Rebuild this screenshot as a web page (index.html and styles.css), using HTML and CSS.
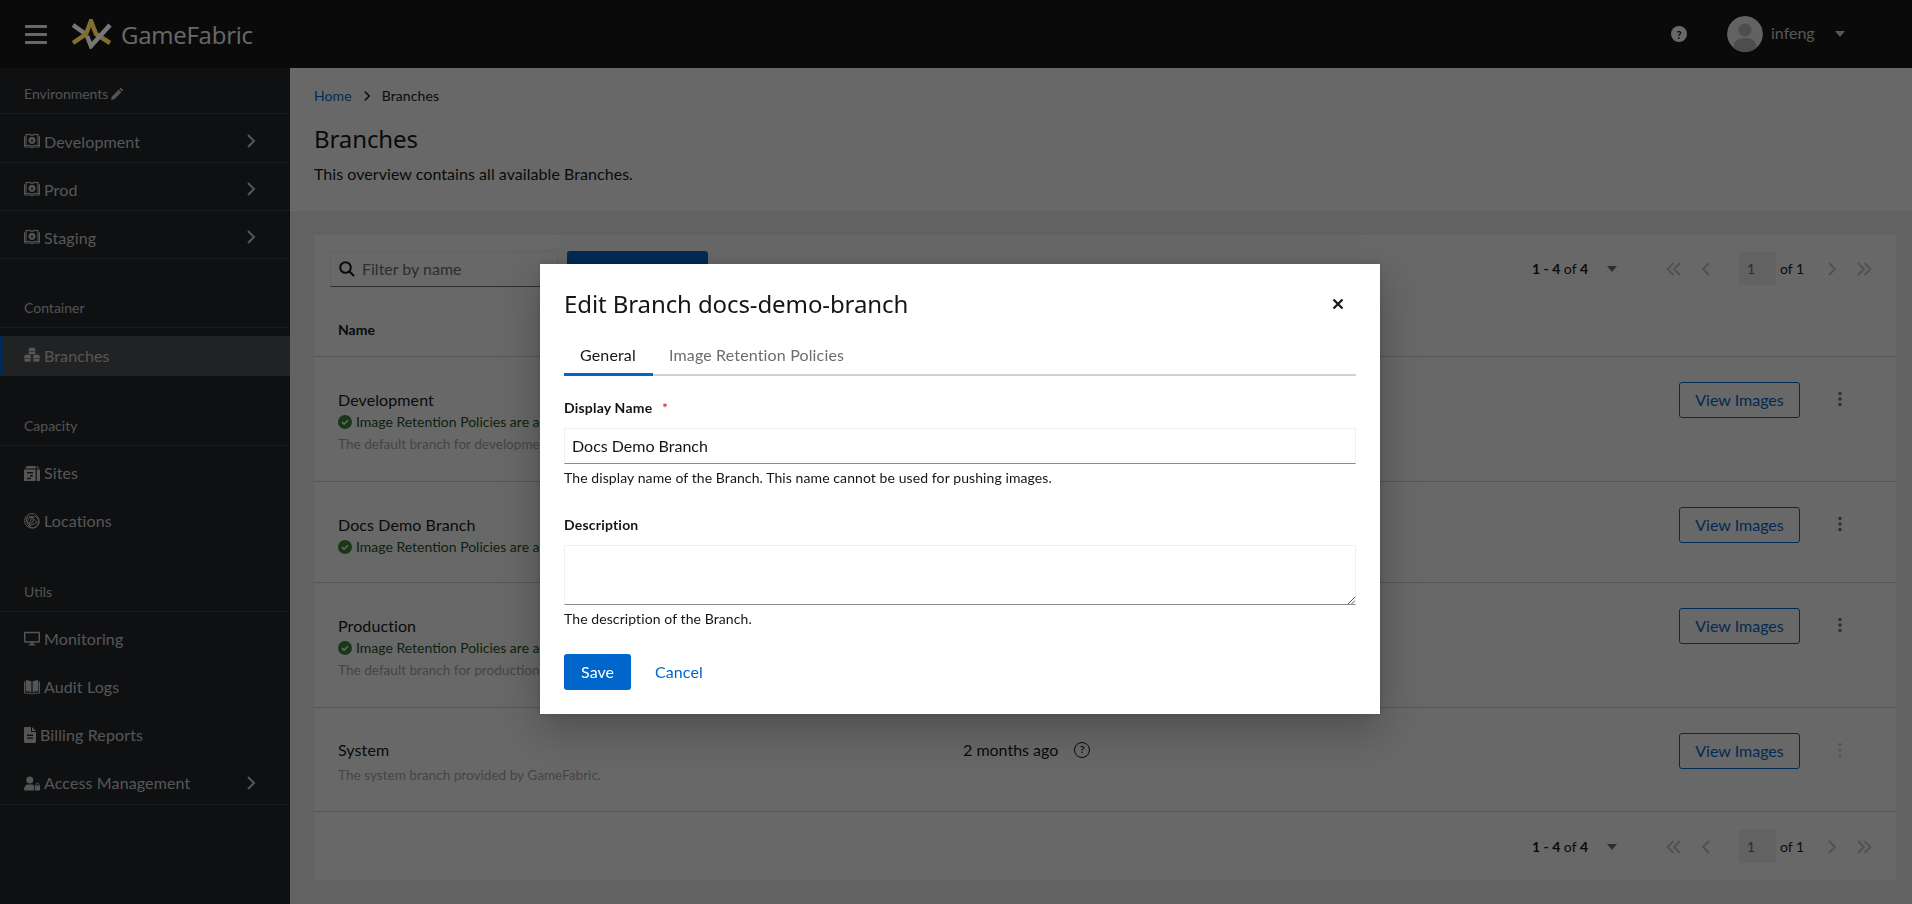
FILE: index.html
```html
<!DOCTYPE html>
<html lang="en">
<head>
<meta charset="utf-8">
<title>Branches - GameFabric</title>
<link rel="stylesheet" href="styles.css">
</head>
<body>
<svg class="defs" width="0" height="0" aria-hidden="true">
  <symbol id="i-bookcog" viewBox="0 0 16 16">
    <path d="M.5 3.200V14H6.500L8 15 9.500 14H15.500V3.200" fill="none" stroke="currentColor" stroke-width="1"/>
    <path d="M2 1.500C4 1.200 6.600 1.500 8 2.400 9.400 1.500 12 1.200 14 1.500V12.500H9.500L8 13.200 6.500 12.500H2Z" fill="none" stroke="currentColor" stroke-width="1.200"/>
    <circle cx="8" cy="7.400" r="2.400" fill="none" stroke="currentColor" stroke-width="1.800"/>
    <path d="M8 3.800V11M4.400 7.400H11.600M5.500 4.900 10.500 9.900M10.500 4.900 5.500 9.900" stroke="currentColor" stroke-width="1"/>
    <circle cx="8" cy="7.400" r="1" fill="#212427"/>
  </symbol>
  <symbol id="i-cubes" viewBox="0 0 16 16">
    <g fill="currentColor">
      <ellipse cx="8" cy="2.200" rx="3.400" ry="1.600"/><rect x="4.600" y="3" width="6.800" height="1.100"/><rect x="4.600" y="4.600" width="6.800" height="1.100"/><ellipse cx="8" cy="6.200" rx="3.400" ry="1.100"/>
      <ellipse cx="3.600" cy="9.200" rx="3.400" ry="1.600"/><rect x=".2" y="10" width="6.800" height="1.100"/><rect x=".2" y="11.600" width="6.800" height="1.100"/><ellipse cx="3.600" cy="13.400" rx="3.400" ry="1.300"/>
      <ellipse cx="12.400" cy="9.200" rx="3.400" ry="1.600"/><rect x="9" y="10" width="6.800" height="1.100"/><rect x="9" y="11.600" width="6.800" height="1.100"/><ellipse cx="12.400" cy="13.400" rx="3.400" ry="1.300"/>
    </g>
  </symbol>
  <symbol id="i-sites" viewBox="0 0 16 16">
    <path fill="currentColor" fill-rule="evenodd" d="M0 4.600H11.600V16H0ZM3 7V8.400H9V7ZM6 10V11.400H9V10ZM3 12.800V14.200H7V12.800ZM12.800 4.600H16V16H12.800ZM1.200 3.600 2.800 1H11L12.400 3.600ZM12 1 13 1 15.600 3.600H13.600Z"/>
  </symbol>
  <symbol id="i-rings" viewBox="0 0 16 16">
    <g fill="none" stroke="currentColor" stroke-width="1">
      <circle cx="7.800" cy="7.800" r="7.200"/><circle cx="9.200" cy="9.200" r="5.800"/><circle cx="5.800" cy="7" r="3.600"/><path d="M5 13 7.600 4 13.600 9.600Z"/>
    </g>
  </symbol>
  <symbol id="i-desktop" viewBox="0 0 16 16">
    <path fill="currentColor" fill-rule="evenodd" d="M1.200.8H14.800C15.500.8 16 1.300 16 2V10.600C16 11.300 15.500 11.800 14.800 11.800H1.200C.5 11.800 0 11.300 0 10.600V2C0 1.300.5.8 1.200.8ZM1.400 2.200V10.200H14.600V2.200ZM6.600 11.800H9.400L9.700 13.400H11.400V14.400H4.600V13.400H6.300Z"/>
  </symbol>
  <symbol id="i-book" viewBox="0 0 16 16">
    <path fill="currentColor" d="M7.400 2.600C6 1.500 3.800 1.100 1.600 1.200V12.200C3.800 12.200 6 12.600 7.400 13.600ZM8.600 2.600C10 1.500 12.200 1.100 14.400 1.200V12.200C12.200 12.200 10 12.600 8.600 13.600Z"/>
    <path fill="none" stroke="currentColor" d="M.5 2.600V14.200C3 14 6 14.200 8 15 10 14.200 13 14 15.500 14.200V2.600"/>
  </symbol>
  <symbol id="i-file" viewBox="0 0 12 16">
    <path fill="currentColor" fill-rule="evenodd" d="M0 1.200C0 .5.5 0 1.200 0H7V4.400C7 4.700 7.300 5 7.600 5H12V14.800C12 15.500 11.500 16 10.800 16H1.200C.5 16 0 15.500 0 14.800ZM3 7.600V9H9V7.600ZM3 10.400V11.800H9V10.400ZM8 0 12 4H8Z"/>
  </symbol>
  <symbol id="i-userlock" viewBox="0 0 16 16">
    <circle cx="5.800" cy="5" r="3.500" fill="currentColor"/>
    <path fill="currentColor" d="M0 14.400C0 11.400 2 9.400 4 9.400H7.600C8.600 9.400 9.400 9.800 10 10.400V15.400H1C.4 15.400 0 15 0 14.400Z"/>
    <rect x="10.800" y="10.400" width="5.200" height="5" rx=".6" fill="currentColor"/>
    <path d="M11.900 10.600V9.400C11.900 7.800 14.900 7.800 14.900 9.400V10.600" fill="none" stroke="currentColor" stroke-width="1"/>
  </symbol>
  <symbol id="i-chev" viewBox="0 0 10 16">
    <path d="M2 2 8 8 2 14" fill="none" stroke="currentColor" stroke-width="2"/>
  </symbol>
  <symbol id="i-kebab" viewBox="0 0 4 16">
    <circle cx="2" cy="2.500" r="1.700" fill="currentColor"/><circle cx="2" cy="8" r="1.700" fill="currentColor"/><circle cx="2" cy="13.500" r="1.700" fill="currentColor"/>
  </symbol>
  <symbol id="i-caret" viewBox="0 0 10 6">
    <path d="M0 0H10L5 6Z" fill="currentColor"/>
  </symbol>
  <symbol id="i-check" viewBox="0 0 14 14">
    <circle cx="7" cy="7" r="7" fill="#3e8635"/>
    <path d="M4 7.200 6.100 9.200 10 5.200" fill="none" stroke="#fff" stroke-width="1.600"/>
  </symbol>
  <symbol id="i-first" viewBox="0 0 16 14">
    <path d="M7.500 1 1.500 7 7.500 13M14 1 8 7 14 13" fill="none" stroke="currentColor" stroke-width="1.800"/>
  </symbol>
  <symbol id="i-prev" viewBox="0 0 10 14">
    <path d="M8 1 2 7 8 13" fill="none" stroke="currentColor" stroke-width="1.800"/>
  </symbol>
  <symbol id="i-next" viewBox="0 0 10 14">
    <path d="M2 1 8 7 2 13" fill="none" stroke="currentColor" stroke-width="1.800"/>
  </symbol>
  <symbol id="i-last" viewBox="0 0 16 14">
    <path d="M2 1 8 7 2 13M8.500 1 14.500 7 8.500 13" fill="none" stroke="currentColor" stroke-width="1.800"/>
  </symbol>
</svg>

<header class="topbar">
  <div class="burger"><span></span><span></span><span></span></div>
  <svg class="logo" viewBox="0 0 40 30" width="40" height="30" aria-label="GameFabric logo">
    <path d="M1 6 15 16" class="logo-grey"/>
    <path d="M1 24 14 15 19 2 24 15 38 24" class="logo-gold"/>
    <path d="M15 17 19 27 38 6" class="logo-grey"/>
  </svg>
  <span class="brand">GameFabric</span>
  <div class="topbar-right">
    <span class="help-solid">?</span>
    <span class="avatar">
      <svg viewBox="0 0 36 36" width="36" height="36">
        <circle cx="18" cy="18" r="18" fill="#f0f0f0"/>
        <circle cx="18" cy="14" r="6.500" fill="#b8bbbe"/>
        <path d="M7 36V30C7 25 11 22 18 22 25 22 29 25 29 30V36Z" fill="#b8bbbe"/>
      </svg>
    </span>
    <span class="username">infeng</span>
    <svg class="user-caret"><use href="#i-caret"/></svg>
  </div>
</header>

<div class="layout">
  <nav class="sidebar">
    <div class="nav-head">Environments <svg class="pencil" viewBox="0 0 12 12"><path d="M0 12 .8 8.600 7.800 1.600 10.400 4.200 3.400 11.200ZM8.500.9 9.200.2C9.500-.1 10-.1 10.300.2L11.800 1.700C12.100 2 12.100 2.500 11.800 2.800L11.100 3.500Z" fill="currentColor"/></svg></div>
    <a class="nav-item ruled"><svg class="nav-ico"><use href="#i-bookcog"/></svg><span class="nav-label">Development</span><svg class="nav-chev"><use href="#i-chev"/></svg></a>
    <a class="nav-item ruled"><svg class="nav-ico"><use href="#i-bookcog"/></svg><span class="nav-label">Prod</span><svg class="nav-chev"><use href="#i-chev"/></svg></a>
    <a class="nav-item ruled"><svg class="nav-ico"><use href="#i-bookcog"/></svg><span class="nav-label">Staging</span><svg class="nav-chev"><use href="#i-chev"/></svg></a>

    <div class="nav-head gap-container">Container</div>
    <a class="nav-item current"><svg class="nav-ico"><use href="#i-cubes"/></svg><span class="nav-label">Branches</span></a>

    <div class="nav-head gap-group">Capacity</div>
    <a class="nav-item"><svg class="nav-ico"><use href="#i-sites"/></svg><span class="nav-label">Sites</span></a>
    <a class="nav-item"><svg class="nav-ico"><use href="#i-rings"/></svg><span class="nav-label">Locations</span></a>

    <div class="nav-head gap-group">Utils</div>
    <a class="nav-item"><svg class="nav-ico"><use href="#i-desktop"/></svg><span class="nav-label">Monitoring</span></a>
    <a class="nav-item"><svg class="nav-ico"><use href="#i-book"/></svg><span class="nav-label">Audit Logs</span></a>
    <a class="nav-item"><svg class="nav-ico file"><use href="#i-file"/></svg><span class="nav-label">Billing Reports</span></a>
    <a class="nav-item ruled last"><svg class="nav-ico"><use href="#i-userlock"/></svg><span class="nav-label">Access Management</span><svg class="nav-chev"><use href="#i-chev"/></svg></a>
  </nav>

  <main class="main">
    <section class="page-head">
      <div class="crumbs"><a class="link">Home</a><svg class="crumb-sep"><use href="#i-chev"/></svg><span>Branches</span></div>
      <h1 class="page-title">Branches</h1>
      <p class="page-desc">This overview contains all available Branches.</p>
    </section>
    <section class="page-body">
      <div class="card">
        <div class="toolbar">
          <div class="filter">
            <svg class="search" viewBox="0 0 16 16"><circle cx="6.500" cy="6.500" r="5.300" fill="none" stroke="currentColor" stroke-width="2"/><path d="M10.500 10.500 15 15" stroke="currentColor" stroke-width="2.200"/></svg>
            <span class="placeholder">Filter by name</span>
          </div>
          <button class="btn-primary create"><span class="plus">+</span> Create Branch</button>
          <div class="pager">
            <span class="pager-count"><b>1 - 4</b> of <b>4</b></span>
            <svg class="pager-caret"><use href="#i-caret"/></svg>
            <svg class="pg-wide"><use href="#i-first"/></svg>
            <svg class="pg-narrow"><use href="#i-prev"/></svg>
            <span class="pg-input">1</span>
            <span class="pg-of">of 1</span>
            <svg class="pg-narrow"><use href="#i-next"/></svg>
            <svg class="pg-wide"><use href="#i-last"/></svg>
          </div>
          <div class="col-name">Name</div>
        </div>

        <div class="row tall">
          <div class="cell-name">
            <div class="row-title">Development</div>
            <div class="row-status"><svg class="check"><use href="#i-check"/></svg>Image Retention Policies are active</div>
            <div class="row-note">The default branch for development.</div>
          </div>
          <button class="btn-outline">View Images</button>
          <svg class="kebab"><use href="#i-kebab"/></svg>
        </div>
        <div class="row short">
          <div class="cell-name">
            <div class="row-title">Docs Demo Branch</div>
            <div class="row-status"><svg class="check"><use href="#i-check"/></svg>Image Retention Policies are active</div>
          </div>
          <button class="btn-outline">View Images</button>
          <svg class="kebab"><use href="#i-kebab"/></svg>
        </div>
        <div class="row tall">
          <div class="cell-name">
            <div class="row-title">Production</div>
            <div class="row-status"><svg class="check"><use href="#i-check"/></svg>Image Retention Policies are active</div>
            <div class="row-note">The default branch for production.</div>
          </div>
          <button class="btn-outline">View Images</button>
          <svg class="kebab"><use href="#i-kebab"/></svg>
        </div>
        <div class="row system">
          <div class="cell-name">
            <div class="row-title">System</div>
            <div class="row-note">The system branch provided by GameFabric.</div>
          </div>
          <div class="row-date">2 months ago <span class="help-outline">?</span></div>
          <button class="btn-outline">View Images</button>
          <svg class="kebab off"><use href="#i-kebab"/></svg>
        </div>

        <div class="card-foot">
          <div class="pager">
            <span class="pager-count"><b>1 - 4</b> of <b>4</b></span>
            <svg class="pager-caret"><use href="#i-caret"/></svg>
            <svg class="pg-wide"><use href="#i-first"/></svg>
            <svg class="pg-narrow"><use href="#i-prev"/></svg>
            <span class="pg-input">1</span>
            <span class="pg-of">of 1</span>
            <svg class="pg-narrow"><use href="#i-next"/></svg>
            <svg class="pg-wide"><use href="#i-last"/></svg>
          </div>
        </div>
      </div>
    </section>
  </main>
</div>

<div class="backdrop">
  <div class="modal" role="dialog">
    <div class="modal-head">
      <h2 class="modal-title">Edit Branch docs-demo-branch</h2>
      <svg class="close" viewBox="0 0 12 12"><path d="M1.500 1.500 10.500 10.500M10.500 1.500 1.500 10.500" stroke="currentColor" stroke-width="2.200"/></svg>
    </div>
    <div class="tabs">
      <span class="tab active">General</span>
      <span class="tab">Image Retention Policies</span>
    </div>
    <div class="field first">
      <label class="label">Display Name <span class="req">*</span></label>
      <div class="input">Docs Demo Branch</div>
      <div class="help">The display name of the Branch. This name cannot be used for pushing images.</div>
    </div>
    <div class="field second">
      <label class="label">Description</label>
      <div class="input area"><svg class="grip" viewBox="0 0 8 8"><path d="M8 1 1 8M8 4.500 4.500 8" stroke="#555" stroke-width="1" fill="none"/></svg></div>
      <div class="help">The description of the Branch.</div>
    </div>
    <div class="actions">
      <button class="btn-primary save">Save</button>
      <a class="link cancel">Cancel</a>
    </div>
  </div>
</div>
</body>
</html>
```

FILE: styles.css
```css
* { box-sizing: border-box; }
html, body { margin: 0; height: 100%; overflow: hidden; }
body {
  font-family: "Lato", "Noto Sans", sans-serif;
  font-size: 16px;
  color: #151515;
  background: #f0f0f0;
}
.defs { position: absolute; }
h1, h2, p { margin: 0; font-weight: 400; }
button { font-family: inherit; }

.topbar {
  height: 68px;
  background: #151515;
  display: flex;
  align-items: center;
  padding-left: 25px;
  color: #fff;
}
.burger { display: flex; flex-direction: column; gap: 5px; width: 22px; margin-right: 25px; }
.burger span { display: block; height: 3px; background: #fff; border-radius: 1px; }
.logo { flex: none; position: relative; z-index: 2; }
.logo-grey { fill: none; stroke: #777; stroke-width: 4.5; }
.logo-gold { fill: none; stroke: #80702c; stroke-width: 4.5; }
.brand { margin-left: 9px; font-family: "Open Sans", sans-serif; font-size: 24px; letter-spacing: -.25px; color: #fff; }
.topbar-right { margin-left: auto; display: flex; align-items: center; padding-right: 67px; }
.help-solid {
  width: 16px; height: 16px; border-radius: 50%; background: #fff; color: #151515;
  font-size: 11px; font-weight: 700; display: flex; align-items: center; justify-content: center;
  margin-right: 40px;
}
.avatar { width: 36px; height: 36px; border-radius: 50%; overflow: hidden; display: block; }
.username { margin-left: 8px; padding-bottom: 3px; font-size: 16px; color: #d2d2d2; width: 45px; }
.user-caret { width: 10px; height: 6px; margin-left: 19px; color: #d2d2d2; }

.layout { display: grid; grid-template-columns: 290px 1fr; height: 836px; }

.sidebar { background: #212427; color: #d2d2d2; }
.nav-head {
  height: 46px;
  padding: 16px 0 0 24px;
  font-size: 14px;
  line-height: 20px;
  border-bottom: 1px solid #3c3f42;
  color: #c8c8c8;
  display: flex;
  align-items: flex-start;
  gap: 3px;
}
.pencil { width: 12px; height: 12px; margin-top: 4px; }
.gap-container { margin-top: 23px; }
.gap-group { margin-top: 24px; }
.nav-head:first-child + .nav-item { margin-top: 1px; }
.nav-item {
  height: 48px;
  display: flex;
  align-items: center;
  padding: 5px 0 0 24px;
  font-size: 16px;
}
.nav-item.ruled { border-bottom: 1px solid #3c3f42; }
.nav-item.last { height: 49px; }
.nav-ico { width: 16px; height: 16px; margin-right: 4px; flex: none; }
.nav-ico.file { width: 12px; }
.nav-label { flex: 1; letter-spacing: .12px; }
.nav-chev { width: 10px; height: 16px; margin-right: 34px; }
.nav-item.current {
  height: 40px;
  margin-top: 8px;
  padding: 0 0 2px 20px;
  background: #4f5255;
  border-left: 4px solid #06c;
}

.main { display: flex; flex-direction: column; min-width: 0; }
.page-head { background: #fff; height: 143px; padding: 18px 24px 0; }
.crumbs { display: flex; align-items: center; font-size: 14px; line-height: 19px; letter-spacing: .1px; }
.link { color: #06c; }
.crumb-sep { width: 8px; height: 12px; margin: 0 11px 0 11px; color: #151515; }
.page-title { font-family: "Noto Sans", sans-serif; font-size: 24px; line-height: 32px; margin-top: 18px; letter-spacing: -.1px; }
.page-desc { font-size: 16px; line-height: 22px; margin-top: 8px; letter-spacing: .05px; }
.page-body { flex: 1; padding: 24px 16px 24px 24px; }

.card { background: #fff; height: 645px; display: flex; flex-direction: column; }
.toolbar { height: 122px; display: flex; align-items: flex-start; padding: 16px 16px 0; border-bottom: 1px solid #d2d2d2; position: relative; }
.filter {
  width: 228px; height: 36px; display: flex; align-items: center; gap: 7px; padding: 0 0 2px 8px;
  border: 1px solid #f0f0f0; border-bottom-color: #6a6e73;
}
.search { width: 16px; height: 16px; color: #151515; margin-top: 2px; }
.placeholder { color: #6a6e73; font-size: 16px; }
.create { margin-left: 9px; width: 141px; height: 36px; }
.plus { font-size: 20px; margin-right: 8px; }
.toolbar .pager { position: absolute; right: 24px; top: 17px; }
.col-name { position: absolute; left: 24px; top: 85px; font-size: 14px; font-weight: 700; line-height: 19px; }

.btn-primary { background: #06c; color: #fff; border: 0; border-radius: 3px; font-size: 16px; padding: 0 0 2px; }
.btn-outline {
  width: 121px; height: 36px; background: #fff; color: #06c; border: 1px solid #06c; border-radius: 3px;
  font-size: 16px; padding: 0 0 2px; flex: none; margin: -6px 37px 0 0;
}

.row { display: flex; align-items: flex-start; padding: 31px 0 0 24px; border-bottom: 1px solid #d2d2d2; }
.row.tall { height: 125px; }
.row.short { height: 101px; }
.row.system { height: 104px; padding-top: 30px; }
.row.system .btn-outline { margin-top: -5px; }
.row.system .kebab { margin-top: 4px; }
.cell-name { flex: 1; min-width: 0; }
.row-title { font-size: 16px; line-height: 23px; letter-spacing: .1px; }
.row-status { display: flex; align-items: center; gap: 4px; font-size: 14px; line-height: 23px; color: #1e4f18; margin-top: -1px; }
.check { width: 14px; height: 14px; flex: none; }
.row-note { font-size: 13.6px; line-height: 23px; color: #a8a8a8; }
.row.system .row-note { margin-top: 3px; }
.row-date { width: 716px; display: flex; align-items: center; gap: 16px; line-height: 23px; font-size: 16px; flex: none; }
.help-outline {
  width: 16px; height: 16px; border: 1.500px solid #151515; border-radius: 50%; font-size: 10px; font-weight: 700;
  display: flex; align-items: center; justify-content: center;
}
.kebab { width: 4px; height: 16px; margin: 3px 54px 0 1px; flex: none; color: #6a6e73; }
.kebab.off { color: #d2d2d2; }

.card-foot { flex: 1; position: relative; }
.card-foot .pager { position: absolute; right: 24px; top: 18px; }
.pager { display: flex; align-items: center; height: 33px; font-size: 14px; }
.pager-count { width: 57px; white-space: nowrap; }
.pager b { font-weight: 700; }
.pager-caret { width: 10px; height: 6px; margin: 0 49px 0 18px; color: #6a6e73; }
.pg-wide { width: 16px; height: 14px; color: #c4c4c4; }
.pg-narrow { width: 10px; height: 14px; color: #c4c4c4; }
.pg-wide + .pg-narrow { margin-left: 19px; }
.pg-narrow + .pg-input { margin-left: 28px; }
.pg-input { width: 37px; height: 33px; background: #f0f0f0; color: #6a6e73; display: flex; align-items: center; padding-left: 8px; }
.pg-of { margin-left: 4px; width: 22px; white-space: nowrap; }
.pg-of + .pg-narrow { margin-left: 25px; }
.pg-narrow + .pg-wide { margin-left: 19px; }

.backdrop {
  position: fixed; inset: 0; background: rgba(3,3,3,.6);
  display: flex; justify-content: center; align-items: flex-start; padding: 264px 0 0 8px;
}
.modal {
  width: 840px; height: 450px; background: #fff; padding: 24px 24px 0;
  box-shadow: 0 16px 40px rgba(3,3,3,.25), 0 0 6px rgba(3,3,3,.1);
}
.modal-head { display: flex; align-items: center; justify-content: space-between; height: 31px; }
.modal-title { font-family: "Noto Sans", sans-serif; font-size: 24px; line-height: 31px; color: #151515; letter-spacing: -.1px; }
.close { width: 12px; height: 12px; margin-right: 12px; color: #151515; }
.tabs { display: flex; margin-top: 15px; height: 42px; border-bottom: 2px solid #d2d2d2; }
.tab { padding: 0 16px; height: 42px; font-size: 16px; line-height: 41px; color: #6a6e73; letter-spacing: .15px; }
.tab.active { color: #151515; border-bottom: 3px solid #06c; width: 89px; }
.field.first { margin-top: 22px; }
.field.second { margin-top: 28px; }
.label { display: block; font-size: 14px; font-weight: 700; line-height: 19px; color: #151515; letter-spacing: .2px; }
.req { color: #c9190b; margin-left: 6px; font-weight: 400; }
.input {
  margin-top: 11px; height: 36px; border: 1px solid #f0f0f0; border-bottom-color: #8a8d90;
  padding: 0 7px; line-height: 34px; font-size: 16px; color: #151515; position: relative;
}
.input.area { height: 60px; }
.grip { position: absolute; right: 0; bottom: 0; width: 8px; height: 8px; }
.help { font-size: 14px; line-height: 19px; margin-top: 4px; color: #151515; letter-spacing: .09px; }
.actions { display: flex; align-items: center; margin-top: 26px; }
.save { width: 67px; height: 36px; }
.cancel { margin-left: 24px; font-size: 16px; padding-bottom: 2px; letter-spacing: .1px; }
```
